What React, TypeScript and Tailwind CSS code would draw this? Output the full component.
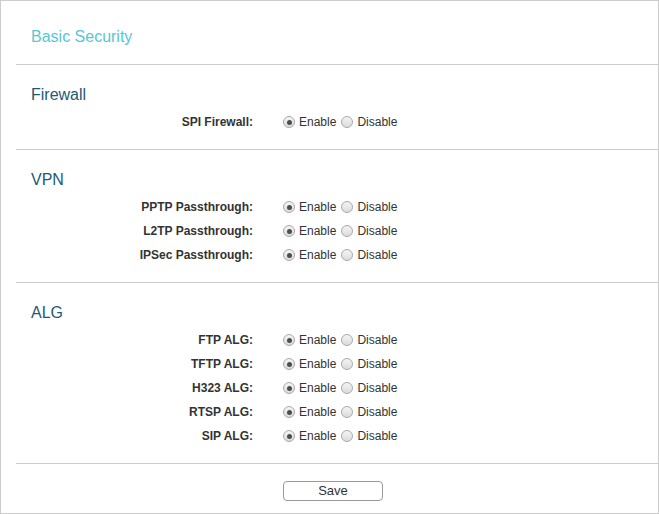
type Row = { label: string };

type Section = { title: string; rows: Row[] };

const sections: Section[] = [
  { title: 'Firewall', rows: [{ label: 'SPI Firewall:' }] },
  {
    title: 'VPN',
    rows: [{ label: 'PPTP Passthrough:' }, { label: 'L2TP Passthrough:' }, { label: 'IPSec Passthrough:' }],
  },
  {
    title: 'ALG',
    rows: [
      { label: 'FTP ALG:' },
      { label: 'TFTP ALG:' },
      { label: 'H323 ALG:' },
      { label: 'RTSP ALG:' },
      { label: 'SIP ALG:' },
    ],
  },
];

const Radio = ({ checked, className = '' }: { checked?: boolean; className?: string }) => (
  <span
    className={`flex h-[12px] w-[12px] shrink-0 items-center justify-center rounded-full border border-[#a9a9a9] bg-gradient-to-b from-[#f4f4f4] to-[#dcdcdc] ${className}`}>
    {checked && <span className="h-[5px] w-[5px] rounded-full bg-[#4d4d4d]" />}
  </span>
);

const SettingRow = ({ label }: Row) => (
  <div className="flex h-[24px] items-center">
    <div className="w-[237px] text-right text-[12px] font-bold text-[#333]">{label}</div>
    <div className="ml-[30px] flex items-center text-[12px] text-[#333]">
      <Radio checked />
      <span className="ml-[4px]">Enable</span>
      <Radio className="ml-[5px]" />
      <span className="ml-[4px]">Disable</span>
    </div>
  </div>
);

export default function App() {
  return (
    <div
      className="box-border h-[514px] w-[659px] border border-[#cccccc] bg-white"
      style={{ fontFamily: '"Liberation Sans", Arial, sans-serif' }}>
      <div className="h-[63px] pl-[30px] pt-[27px] text-[16px] leading-[18px] text-[#58c6d3]">Basic Security</div>
      {sections.map((s) => (
        <section key={s.title} className="ml-[15px] border-t border-[#cccccc] pb-[15px] pt-[21px]">
          <h2 className="pl-[15px] text-[16px] leading-[18px] text-[#1d5a76]">{s.title}</h2>
          <div className="mt-[6px]">
            {s.rows.map((r) => (
              <SettingRow key={r.label} label={r.label} />
            ))}
          </div>
        </section>
      ))}
      <div className="ml-[15px] flex border-t border-[#cccccc] pt-[17px]">
        <button className="ml-[267px] h-[20px] w-[100px] rounded-[4px] border border-[#9a9a9a] bg-white text-[13px] leading-[18px] text-[#333]">
          Save
        </button>
      </div>
    </div>
  );
}
